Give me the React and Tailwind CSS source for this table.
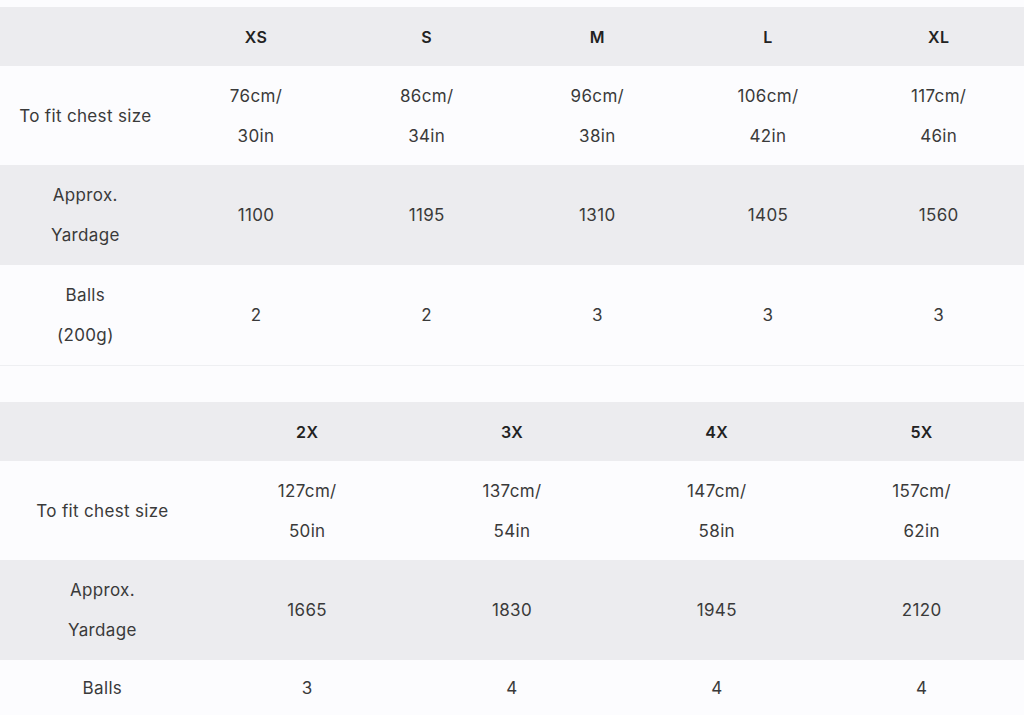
const tableOne = {
  sizes: ['XS', 'S', 'M', 'L', 'XL'],
  rows: [
    { label: ['To fit chest size'], values: [['76cm/', '30in'], ['86cm/', '34in'], ['96cm/', '38in'], ['106cm/', '42in'], ['117cm/', '46in']] },
    { label: ['Approx.', 'Yardage'], values: [['1100'], ['1195'], ['1310'], ['1405'], ['1560']] },
    { label: ['Balls', '(200g)'], values: [['2'], ['2'], ['3'], ['3'], ['3']] },
  ],
};

const tableTwo = {
  sizes: ['2X', '3X', '4X', '5X'],
  rows: [
    { label: ['To fit chest size'], values: [['127cm/', '50in'], ['137cm/', '54in'], ['147cm/', '58in'], ['157cm/', '62in']] },
    { label: ['Approx.', 'Yardage'], values: [['1665'], ['1830'], ['1945'], ['2120']] },
    { label: ['Balls'], values: [['3'], ['4'], ['4'], ['4']] },
  ],
};

const rowHeights = ['h-[99px]', 'h-[100px]', 'h-[100px]'];

function Cell({ lines }) {
  return (
    <div className="flex flex-col items-center justify-center text-center">
      {lines.map((line, i) => (
        <span key={i} className="leading-[40px]">{line}</span>
      ))}
    </div>
  );
}

function SizeTable({ data, cols, bordered, lastRow }) {
  return (
    <div className={bordered ? 'border-b border-[#eeeff2]' : ''}>
      <div className={`grid ${cols} h-[59px] bg-[#ececef] items-center`}>
        <div></div>
        {data.sizes.map(s => (
          <div key={s} className="text-center text-[16px] font-semibold text-[#222]">{s}</div>
        ))}
      </div>
      {data.rows.map((row, i) => (
        <div
          key={i}
          className={`grid ${cols} ${i === 2 && lastRow ? lastRow : rowHeights[i]} ${i % 2 === 1 ? 'bg-[#ececef]' : 'bg-[#fcfcfe]'}`}
        >
          <Cell lines={row.label} />
          {row.values.map((v, j) => (
            <Cell key={j} lines={v} />
          ))}
        </div>
      ))}
    </div>
  );
}

export default function App() {
  return (
    <div
      className="h-[715px] overflow-hidden bg-[#fcfcfe] pt-[7px] text-[17px] tracking-[0.02em] text-[#3a3a3a]"
      style={{ fontFamily: 'Inter, "Open Sans", sans-serif' }}
    >
      <SizeTable data={tableOne} cols="grid-cols-6" bordered />
      <div className="h-[36px]"></div>
      <SizeTable data={tableTwo} cols="grid-cols-5" lastRow="h-[56px]" />
    </div>
  );
}
